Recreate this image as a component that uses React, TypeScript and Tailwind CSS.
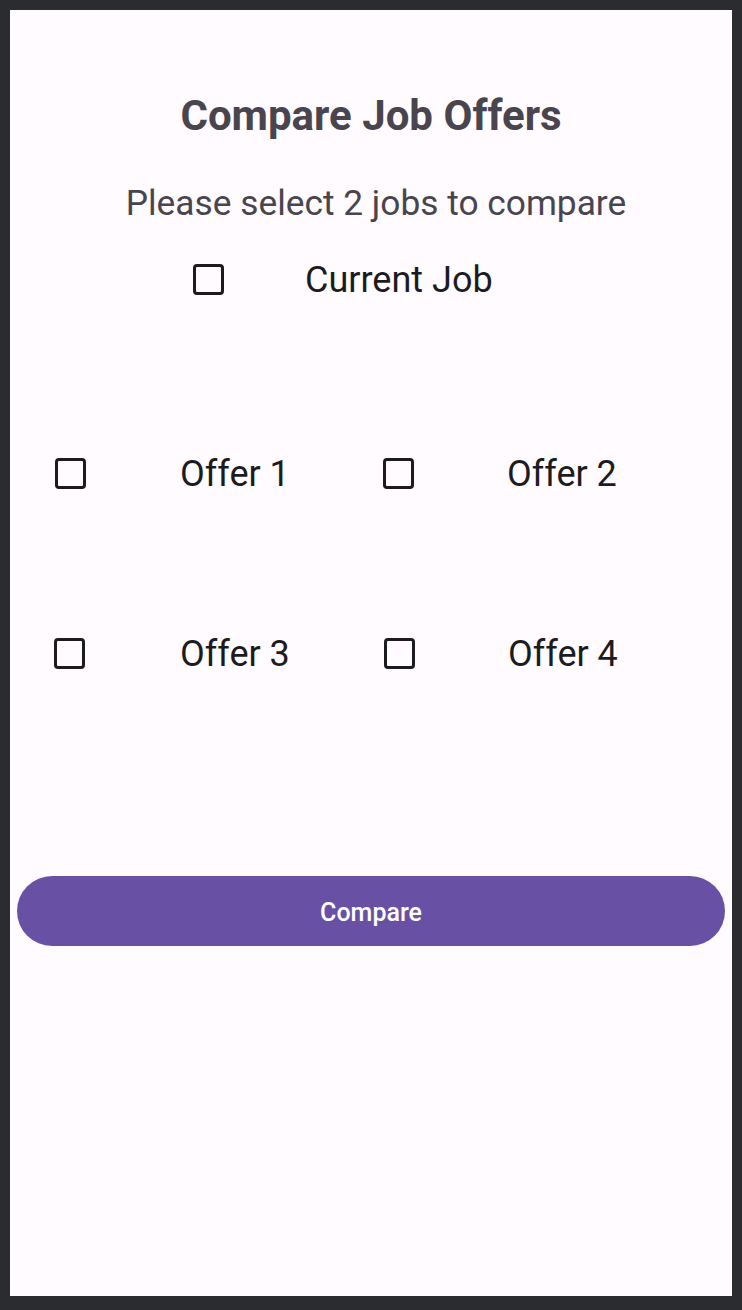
import React from 'react'

const FONT = { fontFamily: 'Roboto, "Liberation Sans", sans-serif' }

function Box() {
  return <span className="block w-[31px] h-[31px] shrink-0 rounded-[4px] border-[3px] border-[#1C1B1F]" />
}

function Option({ label, gap }: { label: string; gap: string }) {
  return (
    <div className="flex items-center h-10">
      <Box />
      <span className={`${gap} pt-[2px] text-[36px] leading-10 text-[#1C1B1F]`}>{label}</span>
    </div>
  )
}

export default function App() {
  return (
    <div className="w-[742px] h-[1310px] bg-[#2b2c2f] p-[10px] pb-[14px]" style={FONT}>
      <div className="h-full bg-[#FFFBFE] flex flex-col pt-[84px]">
        <h1 className="text-center text-[42px] leading-[44px] font-bold text-[#49454F]">Compare Job Offers</h1>
        <p className="mt-[45px] pl-[10px] text-center text-[35.3px] leading-10 text-[#49454F]">Please select 2 jobs to compare</p>

        {/* current job */}
        <div className="mt-9 ml-[183px] flex items-center h-10">
          <Box />
          <span className="ml-[81px] pt-[2px] text-[36px] leading-10 text-[#1C1B1F]">Current Job</span>
        </div>

        {/* offers grid */}
        <div className="mt-[154px] ml-[45px] grid grid-cols-[328px_328px]">
          <Option label="Offer 1" gap="ml-[94px]" />
          <Option label="Offer 2" gap="ml-[93px]" />
        </div>
        <div className="mt-[140px] ml-[44px] grid grid-cols-[330px_328px]">
          <Option label="Offer 3" gap="ml-[95px]" />
          <Option label="Offer 4" gap="ml-[93px]" />
        </div>

        <div className="mt-[203px] px-[7px]">
          <button className="w-full h-[70px] pt-[3px] rounded-full bg-[#6851A5] text-white text-[25px] font-medium">
            Compare
          </button>
        </div>
      </div>
    </div>
  )
}
